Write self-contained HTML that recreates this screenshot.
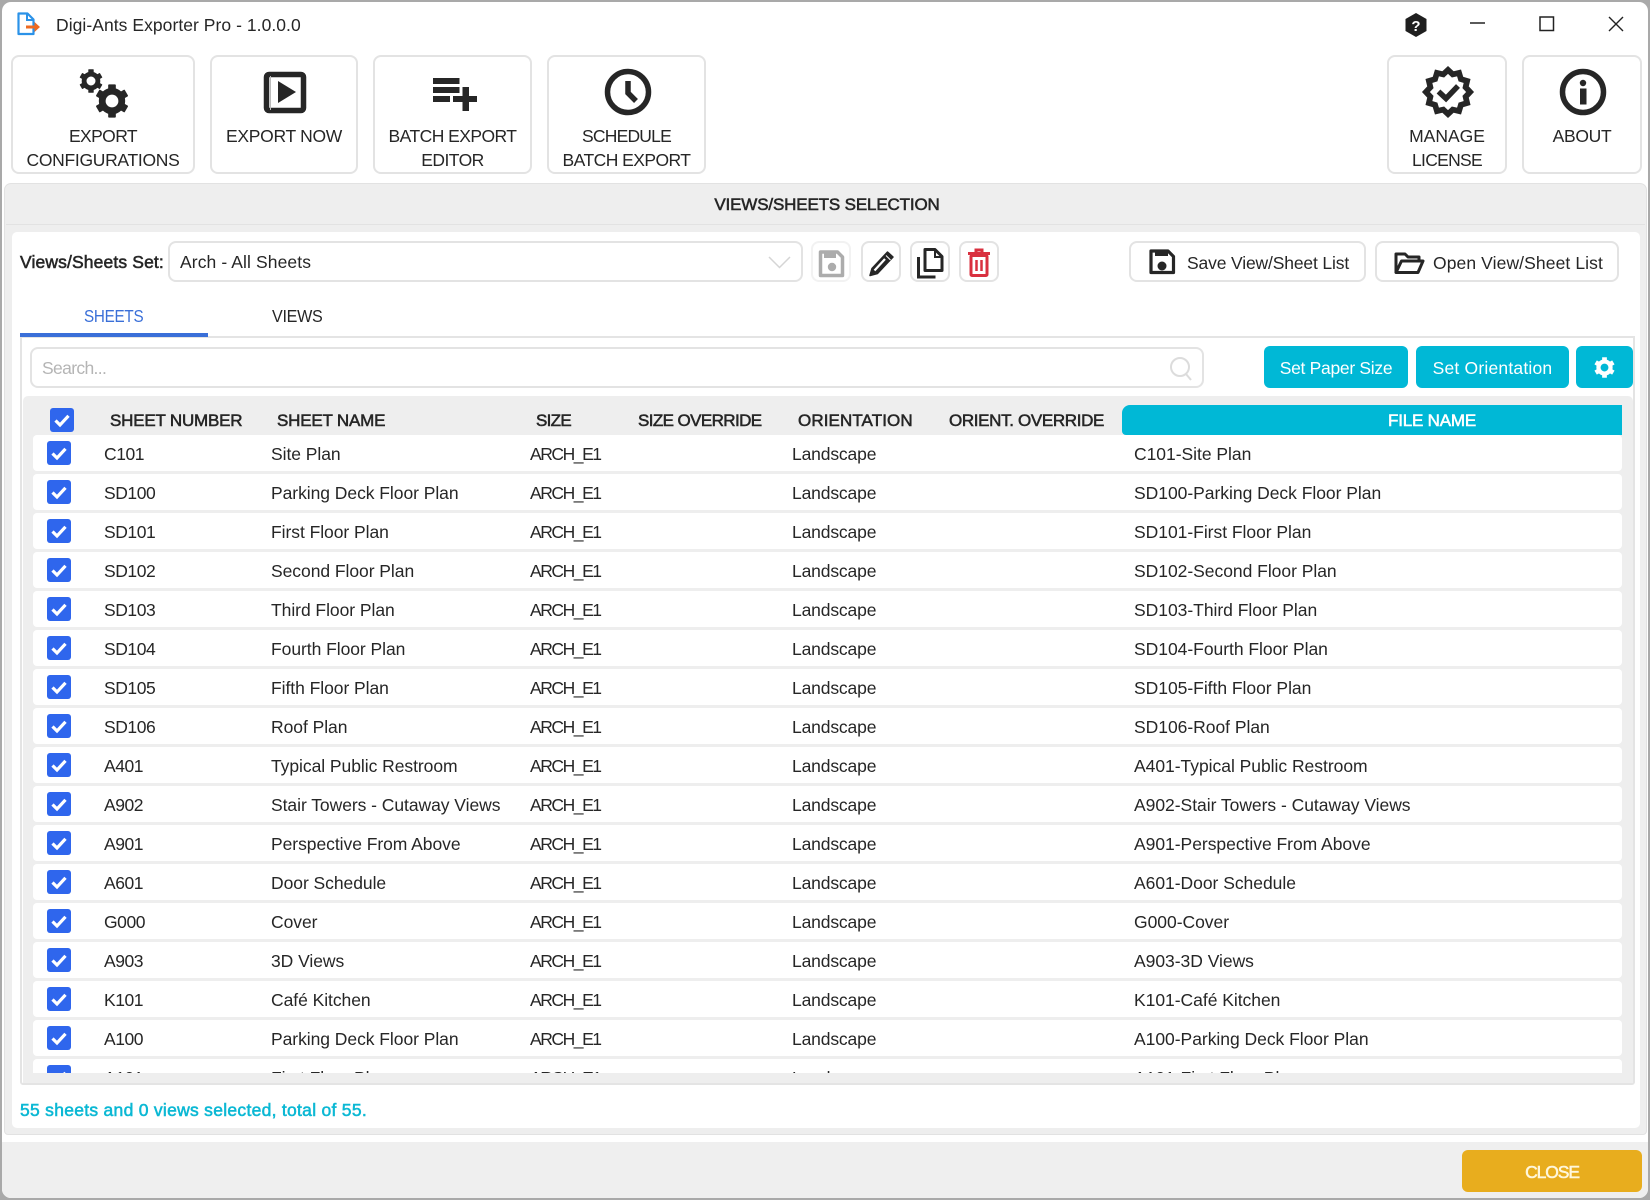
<!DOCTYPE html>
<html><head><meta charset="utf-8"><style>
html,body{margin:0;padding:0;width:1650px;height:1200px;overflow:hidden;background:#a9a9a9;font-family:"Liberation Sans",sans-serif;color:#262626}
.a{position:absolute;box-sizing:border-box}
.t{position:absolute;white-space:nowrap;font-size:17.5px;letter-spacing:-.15px}
.b{position:absolute;box-sizing:border-box;background:#fff;border:2px solid #e3e3e3;border-radius:8px}
.bt{position:absolute;left:0;right:0;text-align:center;white-space:nowrap;font-size:17.5px;letter-spacing:-.55px;line-height:24px}
.s{-webkit-text-stroke:.55px currentColor}
.cy{position:absolute;background:#00b8d6;border-radius:6px;color:#fff;text-align:center;font-size:17.5px;line-height:44px;letter-spacing:-.1px}
svg{position:absolute;overflow:visible}
.h{position:absolute;top:405px;height:30px;line-height:32px;white-space:nowrap;font-size:17px;letter-spacing:-.2px;-webkit-text-stroke:.55px #262626}
#rows{position:absolute;left:0;top:435px;width:1650px;height:638px;overflow:hidden}
.r{position:relative;margin-left:33px;width:1589px;height:36px;margin-bottom:3px;background:#fff;border-radius:4px;font-size:17.5px;line-height:36px;letter-spacing:0;white-space:nowrap}
.r span{position:absolute;top:1px}
.c1{left:71px;letter-spacing:-.45px}.c2{left:238px;letter-spacing:-.05px}.c3{left:497px;letter-spacing:-1.45px}.c4{left:759px;letter-spacing:-.15px}.c5{left:1101px;letter-spacing:-.03px}
.r svg{left:14px;top:6px}
</style></head><body>
<svg width="0" height="0" style="position:absolute"><defs>
<symbol id="chk" viewBox="0 0 24 24"><rect width="24" height="24" rx="3" fill="#2f66ed"/><path d="M5.500 12.500l4.500 4.500L18.500 7.800" fill="none" stroke="#fff" stroke-width="3.200"/></symbol>
<symbol id="gear" viewBox="-20 -20 40 40" overflow="visible"><g fill="#262626"><circle r="11.5" fill="none" stroke="#262626" stroke-width="8"/><rect x="-4.5" y="-19.5" width="9" height="7" rx="1"/><rect x="-4.5" y="-19.5" width="9" height="7" rx="1" transform="rotate(60)"/><rect x="-4.5" y="-19.5" width="9" height="7" rx="1" transform="rotate(120)"/><rect x="-4.5" y="-19.5" width="9" height="7" rx="1" transform="rotate(180)"/><rect x="-4.5" y="-19.5" width="9" height="7" rx="1" transform="rotate(240)"/><rect x="-4.5" y="-19.5" width="9" height="7" rx="1" transform="rotate(300)"/></g></symbol>
</defs></svg>

<div class="a" style="left:2px;top:2px;width:1646px;height:1196px;background:#fff;border-radius:9px;overflow:hidden">
  <div class="a" style="left:0;top:1140px;width:1646px;height:56px;background:#efefef"></div>
</div>

<!-- title bar -->
<svg style="left:0;top:0" width="1650" height="50">
 <path d="M18.500 13.500h9l6 6v14.500h-15z" fill="#fff" stroke="#2b92e8" stroke-width="2.200" stroke-linejoin="round"/>
 <path d="M27 13.500v6.500h6.500" fill="none" stroke="#2b92e8" stroke-width="2"/>
 <path d="M26 25.500h8.500v-3.500l5.500 5-5.500 5v-3.500H26z" fill="#ee6a21"/>
 <path d="M1416 13l10.500 6v12l-10.500 6-10.500-6V19z" fill="#1f1f1f"/>
 <text x="1416" y="31" text-anchor="middle" font-family="Liberation Sans" font-weight="700" font-size="15" fill="#fff">?</text>
 <path d="M1470 23h15" stroke="#222" stroke-width="1.500"/>
 <rect x="1540" y="17" width="13.500" height="13.500" fill="none" stroke="#222" stroke-width="1.500"/>
 <path d="M1609 17l14 14M1623 17l-14 14" stroke="#222" stroke-width="1.400"/>
</svg>
<div class="t" style="left:56px;top:13px;line-height:24px;font-size:17.5px;letter-spacing:.05px">Digi-Ants Exporter Pro - 1.0.0.0</div>

<!-- toolbar -->
<div class="b" style="left:11px;top:55px;width:184px;height:119px"><div class="bt" style="top:67px;letter-spacing:-.6px">EXPORT</div><div class="bt" style="top:91px;letter-spacing:-.3px">CONFIGURATIONS</div></div>
<div class="b" style="left:210px;top:55px;width:148px;height:119px"><div class="bt" style="top:67px;letter-spacing:-.3px">EXPORT NOW</div></div>
<div class="b" style="left:373px;top:55px;width:159px;height:119px"><div class="bt" style="top:67px">BATCH EXPORT</div><div class="bt" style="top:91px">EDITOR</div></div>
<div class="b" style="left:547px;top:55px;width:159px;height:119px"><div class="bt" style="top:67px;letter-spacing:-.8px">SCHEDULE</div><div class="bt" style="top:91px">BATCH EXPORT</div></div>
<div class="b" style="left:1387px;top:55px;width:120px;height:119px"><div class="bt" style="top:67px;letter-spacing:0">MANAGE</div><div class="bt" style="top:91px;letter-spacing:-.7px">LICENSE</div></div>
<div class="b" style="left:1522px;top:55px;width:120px;height:119px"><div class="bt" style="top:67px;letter-spacing:-.3px">ABOUT</div></div>

<svg style="left:0;top:0" width="1650" height="180">
 <use href="#gear" x="79" y="69" width="24" height="24"/>
 <use href="#gear" x="95" y="84" width="34" height="34"/>
 <rect x="266.500" y="74.500" width="37" height="36" rx="2.500" fill="#fff" stroke="#262626" stroke-width="5.500"/>
 <path d="M270.500 76v34" stroke="#bbb" stroke-width="1"/>
 <path d="M278 81l18 11-18 11z" fill="#262626"/>
 <g fill="#262626"><rect x="433" y="78" width="26.500" height="6"/><rect x="433" y="87" width="26.500" height="6"/><rect x="433" y="96" width="17" height="6"/><rect x="453" y="96" width="24" height="6"/><rect x="462.500" y="87" width="6.500" height="24"/></g>
 <circle cx="628" cy="92" r="20.500" fill="#fff" stroke="#262626" stroke-width="5.500"/>
 <path d="M628 81v12l8 8" fill="none" stroke="#262626" stroke-width="5.500"/>
 <g transform="translate(1448 92) scale(.96) translate(-1448 -92)"><polygon points="1471,92 1466.350,96.920 1467.900,103.500 1461.440,105.440 1459.500,111.900 1452.920,110.350 1448,115 1443.080,110.350 1436.500,111.900 1434.560,105.440 1428.100,103.500 1429.650,96.920 1425,92 1429.650,87.080 1428.100,80.500 1434.560,78.560 1436.500,72.100 1443.080,73.650 1448,69 1452.920,73.650 1459.500,72.100 1461.440,78.560 1467.900,80.500 1466.350,87.080" fill="none" stroke="#262626" stroke-width="6" stroke-linejoin="miter"/></g>
 <path d="M1438.500 91.500l7.500 7 12-12.500" fill="none" stroke="#262626" stroke-width="5.500"/>
 <circle cx="1583" cy="92" r="20.500" fill="#fff" stroke="#262626" stroke-width="5.500"/>
 <circle cx="1583" cy="83" r="3.200" fill="#262626"/>
 <rect x="1580" y="88.500" width="6.500" height="16" fill="#262626"/>
</svg>

<!-- panel -->
<div class="a" style="left:4px;top:183px;width:1643px;height:952px;background:#eee;border:1px solid #e2e2e2;border-radius:7px 7px 4px 4px"></div>
<div class="a" style="left:6px;top:224px;width:1639px;height:1px;background:#e2e2e2"></div>
<div class="a" style="left:12px;top:232px;width:1628px;height:896px;background:#fff;border-radius:5px"></div>
<div class="t s" style="left:0;width:1654px;text-align:center;top:193px;line-height:24px;font-size:17px;letter-spacing:-.15px">VIEWS/SHEETS SELECTION</div>

<!-- set row -->
<div class="t s" style="left:20px;top:250px;line-height:24px;letter-spacing:.13px;font-size:17.5px">Views/Sheets Set:</div>
<div class="b" style="left:168px;top:241px;width:635px;height:41px"></div>
<div class="t" style="left:180px;top:250px;line-height:24px;letter-spacing:.1px">Arch - All Sheets</div>
<div class="b" style="left:811px;top:241px;width:40px;height:41px;border-color:#f2f2f2"></div>
<div class="b" style="left:861px;top:241px;width:40px;height:41px"></div>
<div class="b" style="left:910px;top:241px;width:40px;height:41px"></div>
<div class="b" style="left:959px;top:241px;width:40px;height:41px"></div>
<div class="b" style="left:1129px;top:241px;width:237px;height:41px"></div>
<div class="b" style="left:1375px;top:241px;width:244px;height:41px"></div>
<div class="t" style="left:1187px;top:251px;line-height:24px;letter-spacing:-.15px;font-size:17.5px">Save View/Sheet List</div>
<div class="t" style="left:1433px;top:251px;line-height:24px;letter-spacing:.1px;font-size:17.5px">Open View/Sheet List</div>
<svg style="left:0;top:230px" width="1650" height="60">
 <path d="M769 27l10.500 10.500L790 27" fill="none" stroke="#d5d5d5" stroke-width="1.500"/>
 <g transform="translate(0,-230)">
 <path d="M820.500 252h17l5 5v18.500h-22z" fill="#fff" stroke="#acacac" stroke-width="3.500" stroke-linejoin="round"/>
 <rect x="824" y="251" width="12" height="7" fill="#acacac"/><circle cx="832" cy="267" r="4.200" fill="#acacac"/>
 <path d="M870 275.500l2-7 15.500-16.500 5.500 5-15.500 16.500z" fill="#262626" stroke="#262626" stroke-width="1.500" stroke-linejoin="round"/>
 <path d="M874.500 270.500l10.500-11.500" stroke="#fff" stroke-width="2.200"/>
 <path d="M886 255.500l4.500 4.500" stroke="#fff" stroke-width="1"/>
 <path d="M925 249.500h10l7 7v14h-17z" fill="#fff" stroke="#262626" stroke-width="3" stroke-linejoin="round"/><path d="M935 249v8h7" fill="none" stroke="#262626" stroke-width="2"/>
 <path d="M918.500 257v20h17" fill="none" stroke="#262626" stroke-width="3"/>
 <path d="M968 253.500h22M976 253v-3h6v3" fill="none" stroke="#d9303f" stroke-width="3"/>
 <rect x="971" y="255.500" width="16" height="20" rx="1" fill="none" stroke="#d9303f" stroke-width="3"/>
 <path d="M976.500 260v11M981.500 260v11" stroke="#d9303f" stroke-width="2.500"/>
 <path d="M1151 251h17l5.500 5.500V272.500h-22.500z" fill="#fff" stroke="#262626" stroke-width="3.200" stroke-linejoin="round"/>
 <rect x="1155" y="250" width="13" height="6" fill="#262626"/><circle cx="1162" cy="266" r="4.500" fill="#262626"/>
 <path d="M1396 272.500V254h9l3 3h11v4M1396 272.500h22l5-11.500h-21.500z" fill="none" stroke="#262626" stroke-width="3" stroke-linejoin="round"/>
 </g>
</svg>

<!-- tabs -->
<div class="t" style="left:84px;top:304px;line-height:24px;color:#3a6fd8;letter-spacing:-.3px;transform:scaleX(.87);transform-origin:0 0">SHEETS</div>
<div class="t" style="left:272px;top:304px;line-height:24px;letter-spacing:-.3px;transform:scaleX(.92);transform-origin:0 0">VIEWS</div>
<div class="a" style="left:20px;top:336px;width:1615px;height:749px;border:2px solid #e4e4e4;border-radius:0 0 3px 3px;background:#fff"></div>
<div class="a" style="left:20px;top:333px;width:188px;height:3.500px;background:#3a6fd8"></div>

<!-- search row -->
<div class="b" style="left:30px;top:347px;width:1174px;height:41px"></div>
<div class="t" style="left:42px;top:356px;line-height:24px;color:#b5b5b5;letter-spacing:-.65px">Search...</div>
<svg style="left:0;top:340px" width="1650" height="50"><circle cx="1180" cy="27" r="9" fill="none" stroke="#dcdcdc" stroke-width="2"/><path d="M1186 34l5 6" stroke="#dcdcdc" stroke-width="2"/></svg>
<div class="cy" style="left:1264px;top:346px;width:144px;height:42px;letter-spacing:-.3px">Set Paper Size</div>
<div class="cy" style="left:1416px;top:346px;width:153px;height:42px;letter-spacing:.2px">Set Orientation</div>
<div class="cy" style="left:1576px;top:346px;width:57px;height:42px"></div>
<svg style="left:1594px;top:357px" width="21" height="21" viewBox="-20 -20 40 40"><circle r="11.500" fill="none" stroke="#fff" stroke-width="8"/><g fill="#fff"><rect x="-4.500" y="-19.500" width="9" height="7"/><rect x="-4.500" y="-19.500" width="9" height="7" transform="rotate(60)"/><rect x="-4.500" y="-19.500" width="9" height="7" transform="rotate(120)"/><rect x="-4.500" y="-19.500" width="9" height="7" transform="rotate(180)"/><rect x="-4.500" y="-19.500" width="9" height="7" transform="rotate(240)"/><rect x="-4.500" y="-19.500" width="9" height="7" transform="rotate(300)"/></g></svg>

<!-- grid -->
<div class="a" style="left:23px;top:396px;width:1610px;height:687px;background:#eee;border-radius:5px 5px 0 0"></div>
<svg style="left:50px;top:408px" width="24" height="24"><use href="#chk" width="24" height="24"/></svg>
<div class="h" style="left:110px">SHEET NUMBER</div>
<div class="h" style="left:277px">SHEET NAME</div>
<div class="h" style="left:536px;letter-spacing:-.7px">SIZE</div>
<div class="h" style="left:638px;letter-spacing:-.6px">SIZE OVERRIDE</div>
<div class="h" style="left:798px;letter-spacing:.1px">ORIENTATION</div>
<div class="h" style="left:949px;letter-spacing:-.35px">ORIENT. OVERRIDE</div>
<div class="h" style="left:1122px;width:500px;box-sizing:border-box;padding-left:120px;text-align:center;background:#00b8d6;color:#fff;-webkit-text-stroke:.55px #fff;border-radius:8px 0 0 4px;letter-spacing:-.2px">FILE NAME</div>

<div id="rows">
<div class="r"><svg width="24" height="24"><use href="#chk" width="24" height="24"/></svg><span class="c1">C101</span><span class="c2">Site Plan</span><span class="c3">ARCH_E1</span><span class="c4">Landscape</span><span class="c5">C101-Site Plan</span></div>
<div class="r"><svg width="24" height="24"><use href="#chk" width="24" height="24"/></svg><span class="c1">SD100</span><span class="c2">Parking Deck Floor Plan</span><span class="c3">ARCH_E1</span><span class="c4">Landscape</span><span class="c5">SD100-Parking Deck Floor Plan</span></div>
<div class="r"><svg width="24" height="24"><use href="#chk" width="24" height="24"/></svg><span class="c1">SD101</span><span class="c2">First Floor Plan</span><span class="c3">ARCH_E1</span><span class="c4">Landscape</span><span class="c5">SD101-First Floor Plan</span></div>
<div class="r"><svg width="24" height="24"><use href="#chk" width="24" height="24"/></svg><span class="c1">SD102</span><span class="c2">Second Floor Plan</span><span class="c3">ARCH_E1</span><span class="c4">Landscape</span><span class="c5">SD102-Second Floor Plan</span></div>
<div class="r"><svg width="24" height="24"><use href="#chk" width="24" height="24"/></svg><span class="c1">SD103</span><span class="c2">Third Floor Plan</span><span class="c3">ARCH_E1</span><span class="c4">Landscape</span><span class="c5">SD103-Third Floor Plan</span></div>
<div class="r"><svg width="24" height="24"><use href="#chk" width="24" height="24"/></svg><span class="c1">SD104</span><span class="c2">Fourth Floor Plan</span><span class="c3">ARCH_E1</span><span class="c4">Landscape</span><span class="c5">SD104-Fourth Floor Plan</span></div>
<div class="r"><svg width="24" height="24"><use href="#chk" width="24" height="24"/></svg><span class="c1">SD105</span><span class="c2">Fifth Floor Plan</span><span class="c3">ARCH_E1</span><span class="c4">Landscape</span><span class="c5">SD105-Fifth Floor Plan</span></div>
<div class="r"><svg width="24" height="24"><use href="#chk" width="24" height="24"/></svg><span class="c1">SD106</span><span class="c2">Roof Plan</span><span class="c3">ARCH_E1</span><span class="c4">Landscape</span><span class="c5">SD106-Roof Plan</span></div>
<div class="r"><svg width="24" height="24"><use href="#chk" width="24" height="24"/></svg><span class="c1">A401</span><span class="c2">Typical Public Restroom</span><span class="c3">ARCH_E1</span><span class="c4">Landscape</span><span class="c5">A401-Typical Public Restroom</span></div>
<div class="r"><svg width="24" height="24"><use href="#chk" width="24" height="24"/></svg><span class="c1">A902</span><span class="c2">Stair Towers - Cutaway Views</span><span class="c3">ARCH_E1</span><span class="c4">Landscape</span><span class="c5">A902-Stair Towers - Cutaway Views</span></div>
<div class="r"><svg width="24" height="24"><use href="#chk" width="24" height="24"/></svg><span class="c1">A901</span><span class="c2">Perspective From Above</span><span class="c3">ARCH_E1</span><span class="c4">Landscape</span><span class="c5">A901-Perspective From Above</span></div>
<div class="r"><svg width="24" height="24"><use href="#chk" width="24" height="24"/></svg><span class="c1">A601</span><span class="c2">Door Schedule</span><span class="c3">ARCH_E1</span><span class="c4">Landscape</span><span class="c5">A601-Door Schedule</span></div>
<div class="r"><svg width="24" height="24"><use href="#chk" width="24" height="24"/></svg><span class="c1">G000</span><span class="c2">Cover</span><span class="c3">ARCH_E1</span><span class="c4">Landscape</span><span class="c5">G000-Cover</span></div>
<div class="r"><svg width="24" height="24"><use href="#chk" width="24" height="24"/></svg><span class="c1">A903</span><span class="c2">3D Views</span><span class="c3">ARCH_E1</span><span class="c4">Landscape</span><span class="c5">A903-3D Views</span></div>
<div class="r"><svg width="24" height="24"><use href="#chk" width="24" height="24"/></svg><span class="c1">K101</span><span class="c2">Café Kitchen</span><span class="c3">ARCH_E1</span><span class="c4">Landscape</span><span class="c5">K101-Café Kitchen</span></div>
<div class="r"><svg width="24" height="24"><use href="#chk" width="24" height="24"/></svg><span class="c1">A100</span><span class="c2">Parking Deck Floor Plan</span><span class="c3">ARCH_E1</span><span class="c4">Landscape</span><span class="c5">A100-Parking Deck Floor Plan</span></div>
<div class="r"><svg width="24" height="24"><use href="#chk" width="24" height="24"/></svg><span class="c1">A101</span><span class="c2">First Floor Plan</span><span class="c3">ARCH_E1</span><span class="c4">Landscape</span><span class="c5">A101-First Floor Plan</span></div>
</div>

<!-- status -->
<div class="t" style="left:20px;top:1098px;line-height:24px;color:#0bb8d4;-webkit-text-stroke:.55px #0bb8d4;letter-spacing:.28px">55 sheets and 0 views selected, total of 55.</div>

<!-- close -->
<div class="a s" style="left:1462px;top:1150px;width:180px;height:42px;background:#e8ad1e;border-radius:6px;color:#fff7dc;text-align:center;line-height:44px;font-size:17.5px;letter-spacing:-1.1px">CLOSE</div>
</body></html>
